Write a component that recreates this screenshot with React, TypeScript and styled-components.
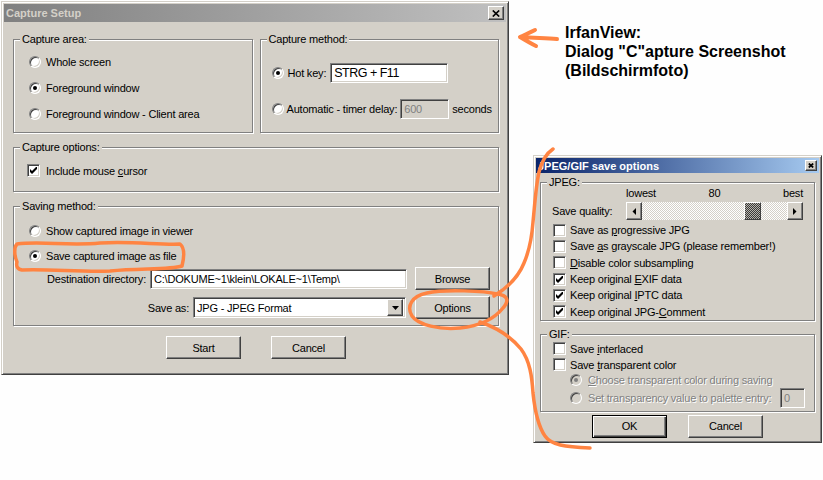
import React from 'react'
import styled, { createGlobalStyle, css } from 'styled-components'

const colors = {
  face: '#d4d0c8',
  shadow: '#808080',
  darkShadow: '#404040',
  highlight: '#ffffff',
  paper: '#fefefe',
  marker: '#ff8442',
}

const raised = css`
  border: 1px solid;
  border-color: ${colors.highlight} ${colors.darkShadow} ${colors.darkShadow} ${colors.highlight};
  box-shadow: inset -1px -1px ${colors.shadow}, inset 1px 1px ${colors.face};
`
const sunken = css`
  border: 1px solid;
  border-color: ${colors.shadow} ${colors.highlight} ${colors.highlight} ${colors.shadow};
  box-shadow: inset 1px 1px ${colors.darkShadow}, inset -1px -1px ${colors.face};
`

const GlobalStyle = createGlobalStyle`
  html, body { margin: 0; padding: 0; background: ${colors.paper}; }
  body { font-family: 'Liberation Sans', Arial, sans-serif; font-size: 11px; color: #000; }
  * { box-sizing: border-box; }
`

const Desktop = styled.div`
  position: relative;
  width: 823px;
  height: 480px;
  overflow: hidden;
  background: ${colors.paper};
`

const Window = styled.div<{ $left: number; $top: number; $width: number; $height: number }>`
  position: absolute;
  left: ${p => p.$left}px;
  top: ${p => p.$top}px;
  width: ${p => p.$width}px;
  height: ${p => p.$height}px;
  display: flex;
  flex-direction: column;
  padding: 2px;
  background: ${colors.face};
  border: 1px solid;
  border-color: ${colors.face} ${colors.darkShadow} ${colors.darkShadow} ${colors.face};
  box-shadow: inset 1px 1px ${colors.highlight}, inset -1px -1px ${colors.shadow};
  letter-spacing: -0.2px;
`

const TitleBar = styled.div<{ $active?: boolean; $height: number }>`
  flex: none;
  height: ${p => p.$height}px;
  display: flex;
  align-items: center;
  justify-content: space-between;
  padding: 0 2px;
  background: ${p =>
    p.$active ? 'linear-gradient(90deg, #0a246a, #a6caf0)' : 'linear-gradient(90deg, #808080, #c0c0c0)'};
  color: ${p => (p.$active ? '#fff' : colors.face)};
  font-weight: bold;
  letter-spacing: 0;
  white-space: nowrap;
`

const CloseButton = styled.div<{ $width: number; $height: number }>`
  ${raised};
  width: ${p => p.$width}px;
  height: ${p => p.$height}px;
  background: ${colors.face};
  display: flex;
  align-items: center;
  justify-content: center;
`

const MainBody = styled.div`
  flex: 1;
  display: flex;
  flex-direction: column;
  padding: 17px 7px 0 9px;
`

const OptionsBody = styled.div`
  flex: 1;
  display: flex;
  flex-direction: column;
  padding: 9px 4px 0 4px;
`

const TopRow = styled.div`
  display: grid;
  grid-template-columns: 1fr 1fr;
  column-gap: 7px;
`

const GroupBox = styled.div<{ $mt?: number }>`
  margin-top: ${p => p.$mt ?? 0}px;
  border: 1px solid ${colors.shadow};
  box-shadow: inset 1px 1px ${colors.highlight}, 1px 1px ${colors.highlight};
`

const Caption = styled.div`
  width: fit-content;
  margin: -7px 0 0 6px;
  padding: 0 2px;
  line-height: 13px;
  height: 13px;
  background: ${colors.face};
  white-space: nowrap;
`

const GroupBody = styled.div<{ $pad: string; $gap?: number }>`
  display: flex;
  flex-direction: column;
  padding: ${p => p.$pad};
  gap: ${p => p.$gap ?? 0}px;
`

const OptionRow = styled.div<{ $h?: number; $mt?: number; $indent?: number; $gap?: number }>`
  display: flex;
  align-items: center;
  height: ${p => p.$h ?? 16}px;
  margin-top: ${p => p.$mt ?? 0}px;
  margin-left: ${p => p.$indent ?? 0}px;
  gap: ${p => p.$gap ?? 5}px;
  white-space: nowrap;
`

const Label = styled.span<{ $disabled?: boolean }>`
  color: ${p => (p.$disabled ? colors.shadow : '#000')};
  text-shadow: ${p => (p.$disabled ? `1px 1px ${colors.highlight}` : 'none')};
`

const RadioMark = styled.span<{ $disabled?: boolean }>`
  flex: none;
  width: 12px;
  height: 12px;
  border-radius: 50%;
  border: 1px solid;
  border-color: ${colors.shadow} ${colors.highlight} ${colors.highlight} ${colors.shadow};
  box-shadow: inset 1px 1px ${colors.darkShadow}, inset -1px -1px ${colors.face};
  background: ${p => (p.$disabled ? colors.face : '#fff')};
  display: flex;
  align-items: center;
  justify-content: center;
`

const RadioDot = styled.span<{ $disabled?: boolean }>`
  width: 4px;
  height: 4px;
  border-radius: 50%;
  background: ${p => (p.$disabled ? colors.shadow : '#000')};
`

const CheckMark = styled.span`
  ${sunken};
  flex: none;
  width: 13px;
  height: 13px;
  background: #fff;
  display: flex;
  align-items: center;
  justify-content: center;
`

const Field = styled.div<{ $width: number; $height?: number; $disabled?: boolean }>`
  ${sunken};
  flex: none;
  width: ${p => p.$width}px;
  height: ${p => p.$height ?? 20}px;
  display: flex;
  align-items: center;
  padding: 0 3px;
  background: ${p => (p.$disabled ? colors.face : '#fff')};
  color: ${p => (p.$disabled ? colors.shadow : '#000')};
  white-space: nowrap;
  overflow: hidden;
`

const HotKeyField = styled(Field)`
  font-size: 12.5px;
  letter-spacing: -0.5px;
`

const PushedRight = styled(Field)`
  margin-left: auto;
`

const Combo = styled.div<{ $width: number }>`
  ${sunken};
  flex: none;
  width: ${p => p.$width}px;
  height: 21px;
  display: flex;
  align-items: center;
  padding: 1px 2px 1px 3px;
  background: #fff;
`

const ComboText = styled.span`
  flex: 1;
  white-space: nowrap;
`

const ComboButton = styled.div`
  ${raised};
  width: 16px;
  height: 17px;
  background: ${colors.face};
  display: flex;
  align-items: center;
  justify-content: center;
`

const FileRow = styled.div<{ $mt: number }>`
  display: flex;
  justify-content: flex-end;
  align-items: center;
  height: 23px;
  margin-top: ${p => p.$mt}px;
  white-space: nowrap;
`

const FieldLabel = styled.span`
  margin-right: 4px;
`

const Button = styled.div<{ $default?: boolean; $ml?: number }>`
  ${raised};
  flex: none;
  width: 75px;
  height: 23px;
  margin-left: ${p => p.$ml ?? 0}px;
  background: ${colors.face};
  display: flex;
  align-items: center;
  justify-content: center;
  ${p =>
    p.$default &&
    css`
      border: 1px solid #000;
      box-shadow: inset 1px 1px ${colors.highlight}, inset -1px -1px ${colors.darkShadow},
        inset -2px -2px ${colors.shadow};
    `}
`

const ButtonRow = styled.div<{ $mt: number; $gap: number }>`
  display: flex;
  justify-content: center;
  gap: ${p => p.$gap}px;
  margin-top: ${p => p.$mt}px;
`

const QualityGrid = styled.div`
  display: grid;
  grid-template-columns: 74px 177px;
  row-gap: 2px;
  align-items: center;
  padding-left: 11px;
  margin-top: -2px;
  white-space: nowrap;
`

const ScaleLabels = styled.div`
  display: grid;
  grid-template-columns: 1fr auto 1fr;
  line-height: 13px;
  & > :last-child {
    justify-self: end;
  }
`

const ScrollBar = styled.div`
  display: flex;
  height: 18px;
`

const ScrollArrow = styled.div`
  ${raised};
  flex: none;
  width: 16px;
  height: 18px;
  background: ${colors.face};
  display: flex;
  align-items: center;
  justify-content: center;
`

const ScrollTrack = styled.div`
  flex: 1;
  display: flex;
  background-image: repeating-conic-gradient(#ffffff 0% 25%, ${colors.face} 0% 50%);
  background-size: 2px 2px;
`

const ScrollThumb = styled.div`
  flex: none;
  width: 17px;
  height: 18px;
  border: 1px solid;
  border-color: ${colors.highlight} ${colors.darkShadow} ${colors.darkShadow} ${colors.highlight};
  background-image: repeating-conic-gradient(#3a3a3a 0% 25%, #b8b4ac 0% 50%);
  background-size: 2px 2px;
`

const Note = styled.div`
  position: absolute;
  left: 565px;
  top: 23px;
  font: bold 16px/19px 'Liberation Sans', Arial, sans-serif;
  color: #000;
  white-space: nowrap;
`

const Scribbles = styled.svg`
  position: absolute;
  left: 0;
  top: 0;
  pointer-events: none;
`

const CloseGlyph = ({ w, h }: { w: number; h: number }) => (
  <svg width={w} height={h} viewBox={`0 0 ${w} ${h}`}>
    <path d={`M0.8 0.5 L${w - 0.8} ${h - 0.5} M${w - 0.8} 0.5 L0.8 ${h - 0.5}`} stroke="#000" strokeWidth={1.7} />
  </svg>
)

const Tick = () => (
  <svg width="7" height="7" viewBox="0 0 7 7">
    <path d="M0 2 L2 4 L7 -1 L7 2 L2 7 L0 5 Z" fill="#000" />
  </svg>
)

const Arrow = ({ dir }: { dir: 'left' | 'right' | 'down' }) => {
  if (dir === 'down')
    return (
      <svg width="7" height="4" viewBox="0 0 7 4">
        <polygon points="0,0 7,0 3.5,4" fill="#000" />
      </svg>
    )
  return (
    <svg width="4" height="7" viewBox="0 0 4 7">
      <polygon points={dir === 'left' ? '4,0 4,7 0.5,3.5' : '0,0 0,7 3.5,3.5'} fill="#000" />
    </svg>
  )
}

const Radio = (props: { checked?: boolean; disabled?: boolean; children: React.ReactNode; indent?: number; gap?: number; h?: number; mt?: number }) => (
  <OptionRow $indent={props.indent} $gap={props.gap} $h={props.h} $mt={props.mt}>
    <RadioMark $disabled={props.disabled}>{props.checked && <RadioDot $disabled={props.disabled} />}</RadioMark>
    <Label $disabled={props.disabled}>{props.children}</Label>
  </OptionRow>
)

const Check = (props: { checked?: boolean; children: React.ReactNode; h?: number; gap?: number }) => (
  <OptionRow $h={props.h} $gap={props.gap}>
    <CheckMark>{props.checked && <Tick />}</CheckMark>
    <Label>{props.children}</Label>
  </OptionRow>
)

const CaptureSetup = () => (
  <Window $left={1} $top={1} $width={508} $height={374}>
    <TitleBar $height={18}>
      <span>Capture Setup</span>
      <CloseButton $width={16} $height={14}>
        <CloseGlyph w={8} h={7} />
      </CloseButton>
    </TitleBar>
    <MainBody>
      <TopRow>
        <GroupBox>
          <Caption>Capture area:</Caption>
          <GroupBody $pad="8px 0 10px 15px" $gap={10}>
            <Radio>Whole screen</Radio>
            <Radio checked>Foreground window</Radio>
            <Radio>Foreground window - Client area</Radio>
          </GroupBody>
        </GroupBox>
        <GroupBox>
          <Caption>Capture method:</Caption>
          <GroupBody $pad="17px 0 0 11px" $gap={16}>
            <OptionRow $h={20} $gap={4}>
              <RadioMark>
                <RadioDot />
              </RadioMark>
              <Label>Hot key:</Label>
              <HotKeyField $width={118}>STRG + F11</HotKeyField>
            </OptionRow>
            <OptionRow $h={20} $gap={3}>
              <RadioMark />
              <Label>Automatic - timer delay:</Label>
              <Field $width={49} $disabled>
                600
              </Field>
              <Label>seconds</Label>
            </OptionRow>
          </GroupBody>
        </GroupBox>
      </TopRow>
      <GroupBox $mt={14}>
        <Caption>Capture options:</Caption>
        <GroupBody $pad="10px 0 14px 13px">
          <Check checked h={13} gap={6}>
            Include mouse <u>c</u>ursor
          </Check>
        </GroupBody>
      </GroupBox>
      <GroupBox $mt={14}>
        <Caption>Saving method:</Caption>
        <GroupBody $pad="10px 8px 6px 15px">
          <Radio>Show captured image in viewer</Radio>
          <Radio checked mt={9}>
            Save captured image as file
          </Radio>
          <FileRow $mt={3}>
            <FieldLabel>Destination directory:</FieldLabel>
            <Field $width={257}>C:\DOKUME~1\klein\LOKALE~1\Temp\</Field>
            <Button $ml={8}>Browse</Button>
          </FileRow>
          <FileRow $mt={6}>
            <FieldLabel>Save as:</FieldLabel>
            <Combo $width={213}>
              <ComboText>JPG - JPEG Format</ComboText>
              <ComboButton>
                <Arrow dir="down" />
              </ComboButton>
            </Combo>
            <Button $ml={9}>Options</Button>
          </FileRow>
        </GroupBody>
      </GroupBox>
      <ButtonRow $mt={10} $gap={30}>
        <Button>Start</Button>
        <Button>Cancel</Button>
      </ButtonRow>
    </MainBody>
  </Window>
)

const SaveOptions = () => {
  const quality = 80
  const trackWidth = 177 - 32
  const thumbWidth = 17
  const thumbLeft = Math.round((quality / 100) * (trackWidth - thumbWidth))
  return (
    <Window $left={533} $top={155} $width={289} $height={288}>
      <TitleBar $height={15} $active>
        <span>JPEG/GIF save options</span>
        <CloseButton $width={12} $height={11}>
          <CloseGlyph w={6} h={5} />
        </CloseButton>
      </TitleBar>
      <OptionsBody>
        <GroupBox>
          <Caption>JPEG:</Caption>
          <QualityGrid>
            <span />
            <ScaleLabels>
              <span>lowest</span>
              <span>{quality}</span>
              <span>best</span>
            </ScaleLabels>
            <span>Save quality:</span>
            <ScrollBar>
              <ScrollArrow>
                <Arrow dir="left" />
              </ScrollArrow>
              <ScrollTrack>
                <ScrollThumb style={{ marginLeft: thumbLeft }} />
              </ScrollTrack>
              <ScrollArrow>
                <Arrow dir="right" />
              </ScrollArrow>
            </ScrollBar>
          </QualityGrid>
          <GroupBody $pad="2px 0 0 12px">
            <Check h={16.3} gap={4}>
              Save as <u>p</u>rogressive JPG
            </Check>
            <Check h={16.3} gap={4}>
              Save <u>a</u>s grayscale JPG (please remember!)
            </Check>
            <Check h={16.3} gap={4}>
              <u>D</u>isable color subsampling
            </Check>
            <Check h={16.3} gap={4} checked>
              Keep original <u>E</u>XIF data
            </Check>
            <Check h={16.3} gap={4} checked>
              Keep original <u>I</u>PTC data
            </Check>
            <Check h={16.3} gap={4} checked>
              Keep original JPG-<u>C</u>omment
            </Check>
          </GroupBody>
        </GroupBox>
        <GroupBox $mt={13}>
          <Caption>GIF:</Caption>
          <GroupBody $pad="0 9px 3px 12px">
            <Check gap={4}>
              Save <u>i</u>nterlaced
            </Check>
            <Check gap={4}>
              Save <u>t</u>ransparent color
            </Check>
            <Radio checked disabled indent={17} gap={6} h={15}>
              <u>C</u>hoose transparent color during saving
            </Radio>
            <OptionRow $indent={17} $gap={6} $h={20}>
              <RadioMark $disabled />
              <Label $disabled>Set transparency value to palette entry:</Label>
              <PushedRight $width={25} $disabled>
                0
              </PushedRight>
            </OptionRow>
          </GroupBody>
        </GroupBox>
        <ButtonRow $mt={3} $gap={21}>
          <Button $default>OK</Button>
          <Button>Cancel</Button>
        </ButtonRow>
      </OptionsBody>
    </Window>
  )
}

const Markup = () => (
  <Scribbles width={823} height={480} viewBox="0 0 823 480">
    <g fill="none" stroke={colors.marker} strokeWidth={3.5} strokeLinecap="round" strokeLinejoin="round">
      <path d="M17 262 C14 255 14 247 17 244 C40 241 70 246 100 243 C130 241 160 245 180 244 C185 248 184 258 182 266 C170 270 140 268 110 271 C80 272 50 269 22 270 C17 269 16 266 17 262 Z" />
      <path d="M497 294 C485 291 445 289 427 293 C412 296 406 306 412 316 C418 325 440 330 460 328 C480 326 495 318 503 308 C510 300 507 295 497 294" />
      <path d="M480 322 C498 328 512 338 521 349 C530 361 532 377 533 393 C535 412 538 426 545 436 C551 445 565 447 590 448" />
      <path d="M494 296 C507 288 518 278 524 263 C530 249 532 236 533 222 C535 202 536 185 539 172 C542 160 547 153 553 149" />
      <path d="M557 39 C545 38 533 38 522 37 M535 30 C529 33 524 35 520 37 C525 40 530 43 536 46" strokeWidth={4} />
    </g>
  </Scribbles>
)

export default function App() {
  return (
    <>
      <GlobalStyle />
      <Desktop>
        <CaptureSetup />
        <Note>
          IrfanView:
          <br />
          Dialog "C"apture Screenshot
          <br />
          (Bildschirmfoto)
        </Note>
        <SaveOptions />
        <Markup />
      </Desktop>
    </>
  )
}
